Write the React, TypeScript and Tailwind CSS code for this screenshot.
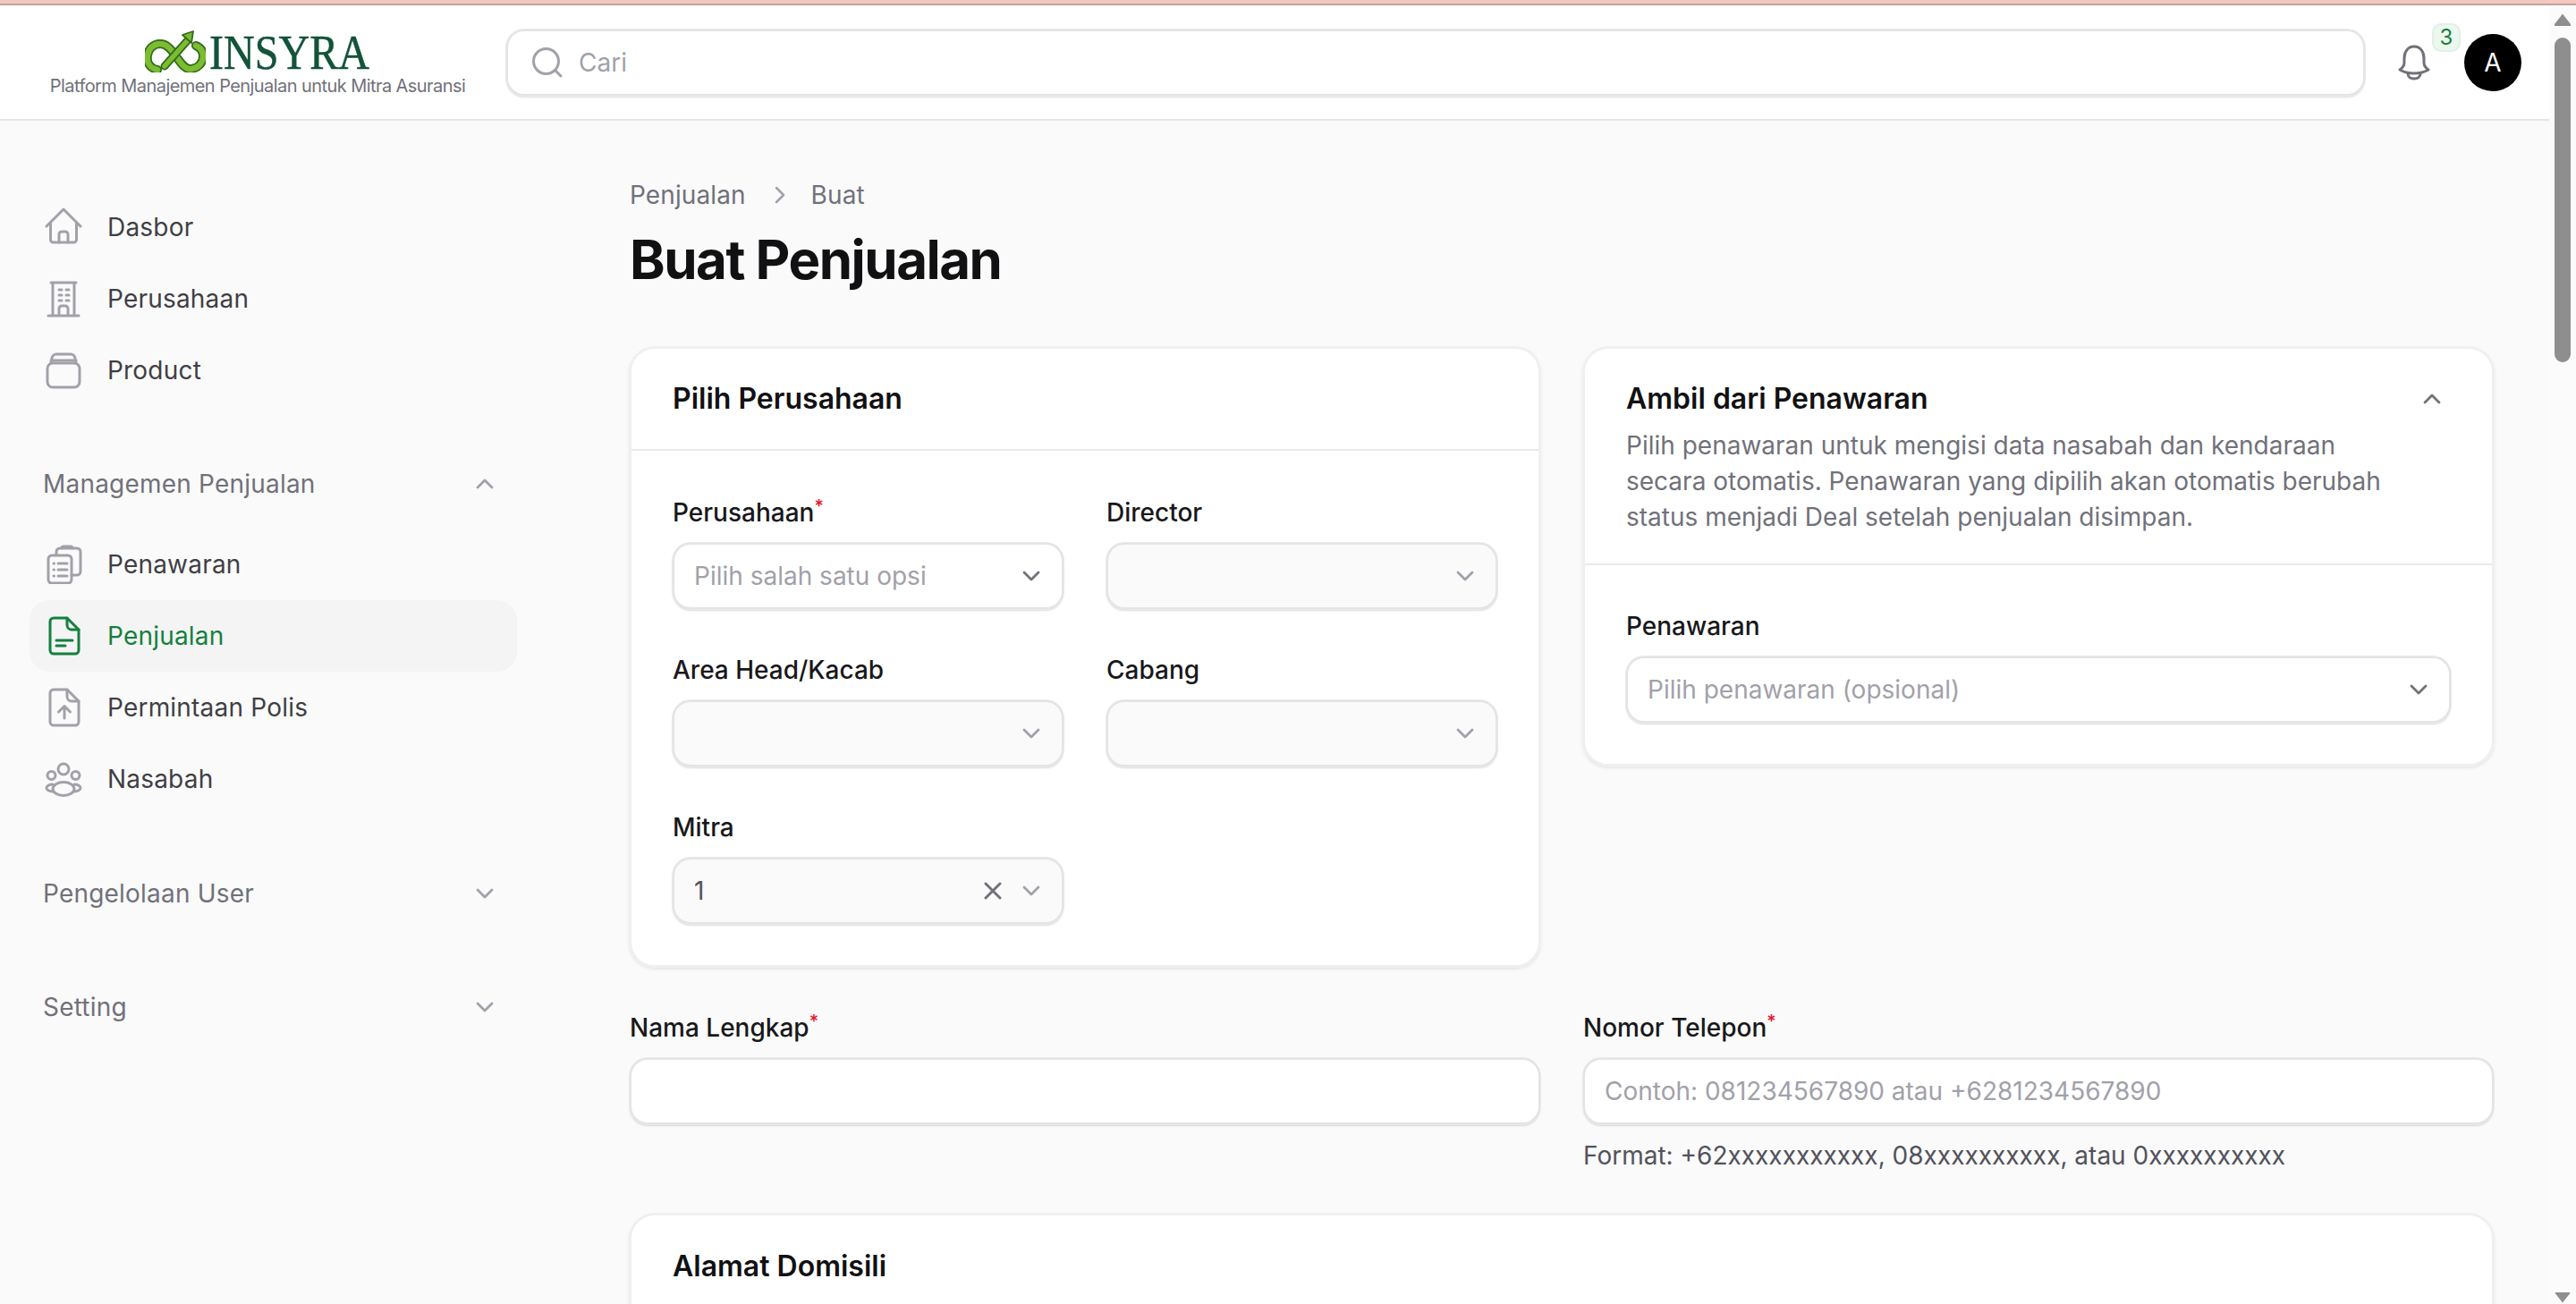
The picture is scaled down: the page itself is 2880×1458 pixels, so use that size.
import type { ReactNode } from "react";

const IconBox = ({ children, className = "text-[#a1a1aa]" }: { children: ReactNode; className?: string }) => (
  <svg viewBox="0 0 44 44" fill="none" stroke="currentColor" strokeWidth="3" strokeLinecap="round" strokeLinejoin="round" className={`h-[44px] w-[44px] shrink-0 ${className}`}>
    {children}
  </svg>
);

const HomeIcon = () => (
  <IconBox>
    <path d="M3 21 22 2l19 19" />
    <path d="M7.5 17v19a3 3 0 0 0 3 3h23a3 3 0 0 0 3-3V17" />
    <path d="M17 39V30a3 3 0 0 1 3-3h4a3 3 0 0 1 3 3v9" />
  </IconBox>
);

const BuildingIcon = () => (
  <IconBox>
    <path d="M8 4h28M10 4v36M34 4v36M5 41h34" />
    <path d="M17 40v-7a3 3 0 0 1 3-3h4a3 3 0 0 1 3 3v7" />
    <path d="M17 12h3M25 12h3M17 18h3M25 18h3M17 24h3M25 24h3" />
  </IconBox>
);

const ProductIcon = () => (
  <IconBox>
    <rect x="4" y="14" width="36" height="27" rx="6" />
    <path d="M8 14l1-5a5 5 0 0 1 5-5h16a5 5 0 0 1 5 5l1 5" />
    <path d="M8 11h28" />
  </IconBox>
);

const ClipboardIcon = () => (
  <IconBox>
    <rect x="5" y="12" width="26" height="31" rx="4" />
    <path d="M14 11V8a4 4 0 0 1 4-4h19a4 4 0 0 1 4 4v22a4 4 0 0 1-4 4h-6" />
    <path d="M20 4V3a2 2 0 0 1 2-1h8a2 2 0 0 1 2 1v1" />
    <path d="M11 21h.5M11 28h.5M11 35h.5M16 21h10M16 28h10M16 35h10" />
  </IconBox>
);

const FileLinesIcon = () => (
  <IconBox className="text-[#15803d]">
    <path d="M11 2h15l13 13v23a4 4 0 0 1-4 4H11a4 4 0 0 1-4-4V6a4 4 0 0 1 4-4Z" />
    <path d="M26 2v8a5 5 0 0 0 5 5h8" />
    <path d="M14 27h18M14 33h10" />
  </IconBox>
);

const FileUpIcon = () => (
  <IconBox>
    <path d="M11 2h15l13 13v23a4 4 0 0 1-4 4H11a4 4 0 0 1-4-4V6a4 4 0 0 1 4-4Z" />
    <path d="M26 2v8a5 5 0 0 0 5 5h8" />
    <path d="M23 34V21M16.500 27l6.500-6.500 6.500 6.500" />
  </IconBox>
);

const UsersIcon = () => (
  <IconBox>
    <circle cx="22" cy="11" r="6" />
    <circle cx="8.500" cy="18" r="4.500" />
    <circle cx="35.500" cy="18" r="4.500" />
    <ellipse cx="22" cy="33" rx="12" ry="7.500" />
    <path d="M10 28c-4 0-7 2-7 4s3 4 7 4M34 28c4 0 7 2 7 4s-3 4-7 4" />
  </IconBox>
);

const Chevron = ({ up = false, className = "text-[#a1a1aa]" }: { up?: boolean; className?: string }) => (
  <svg viewBox="0 0 20 12" fill="none" stroke="currentColor" strokeWidth="2.800" strokeLinecap="round" strokeLinejoin="round" className={`h-[12px] w-[20px] shrink-0 ${className}`}>
    <path d={up ? "M2 10l8-8 8 8" : "M2 2l8 8 8-8"} />
  </svg>
);

const Logo = () => (
  <div className="flex w-[464px] shrink-0 flex-col items-center">
    <div className="mt-[2px] flex h-[48px] items-end">
      <svg viewBox="0 0 68 47" fill="none" strokeLinecap="round" strokeLinejoin="round" className="h-[47px] w-[68px]">
        <path d="M14 44C4 42 2 34 3 28c1-8 7-13 14-13 9 0 14 9 20 17 5 7 9 12 15 11 8-1 13-7 13-14 0-6-3-10-8-12" stroke="#2f6b1e" strokeWidth="10" />
        <path d="M14 44C4 42 2 34 3 28c1-8 7-13 14-13 9 0 14 9 20 17 5 7 9 12 15 11 8-1 13-7 13-14 0-6-3-10-8-12" stroke="#7dbb30" strokeWidth="6.500" />
        <path d="M22 40 47 12" stroke="#2f6b1e" strokeWidth="9" />
        <path d="M22 40 47 12" stroke="#7dbb30" strokeWidth="5.500" />
        <path d="M54 1 42 5l10 9Z" fill="#7dbb30" stroke="#2f6b1e" strokeWidth="1.800" />
      </svg>
      <span className="ml-[4px] w-[181px] origin-left scale-x-[0.89] whitespace-nowrap font-['Liberation_Serif',serif] text-[54px] leading-[43px] text-[#12533a] [-webkit-text-stroke:0.5px_#12533a]">INSYRA</span>
    </div>
    <p className="mt-[3px] whitespace-nowrap text-[20px] leading-[24px] tracking-[-0.570px] text-[#71717a]">Platform Manajemen Penjualan untuk Mitra Asuransi</p>
  </div>
);

const NavRow = ({ icon, label, active = false }: { icon: ReactNode; label: string; active?: boolean }) => (
  <div className={`flex h-[80px] items-center gap-[27px] rounded-[22px] pl-[16px] text-[28px] tracking-[0.200px] ${active ? "bg-[#f4f4f5] text-[#15803d]" : "text-[#3f3f46]"}`}>
    {icon}
    <span>{label}</span>
  </div>
);

const NavSection = ({ label, up = false, className }: { label: string; up?: boolean; className: string }) => (
  <div className={`flex h-[40px] items-center justify-between pl-[15px] pr-[26px] text-[28px] tracking-[0.200px] text-[#71717a] ${className}`}>
    <span>{label}</span>
    <Chevron up={up} />
  </div>
);

const Label = ({ text, required = false }: { text: string; required?: boolean }) => (
  <label className="block text-[28px] font-medium leading-[40px] text-[#18181b]">
    {text}
    {required && <span className="align-super text-[20px] leading-none text-[#e5112b]">*</span>}
  </label>
);

const fieldBox = "mt-[14px] flex h-[74px] items-center rounded-[20px] border-2 border-[#e4e4e7] shadow-[0_0_0_1px_#e9e9eb,0_2px_2px_rgba(0,0,0,0.14)]";

const SelectField = ({
  label,
  required = false,
  placeholder,
  value,
  disabled = false,
}: {
  label: string;
  required?: boolean;
  placeholder?: string;
  value?: string;
  disabled?: boolean;
}) => (
  <div>
    <Label text={label} required={required} />
    <div className={`${fieldBox} pl-[22px] pr-[24px] text-[28px] ${disabled ? "bg-[#fafafa]" : "bg-white"}`}>
      <span className={`flex-1 ${value ? "text-[#52525b]" : "text-[#a1a1aa]"}`}>{value ?? placeholder}</span>
      {value && (
        <svg viewBox="0 0 20 20" fill="none" stroke="#71717a" strokeWidth="3" strokeLinecap="round" className="mr-[23px] h-[20px] w-[20px]">
          <path d="M2 2l16 16M18 2 2 18" />
        </svg>
      )}
      <Chevron className={disabled ? "text-[#a1a1aa]" : "text-[#71717a]"} />
    </div>
  </div>
);

const TextField = ({ label, placeholder, hint }: { label: string; placeholder?: string; hint?: string }) => (
  <div>
    <Label text={label} required />
    <div className={`${fieldBox} bg-white px-[22px] text-[28px] text-[#a1a1aa]`}>{placeholder}</div>
    {hint && <p className="mt-[15px] text-[28px] leading-[40px] text-[#52525b]">{hint}</p>}
  </div>
);

const cardBox = "rounded-[28px] border-2 border-[#efefef] bg-white shadow-[0_0_0_1px_#f1f1f1,0_2px_4px_rgba(0,0,0,0.12)]";

export default function App() {
  return (
    <div className="flex h-screen w-full flex-col overflow-hidden bg-[#fafafa] font-['Inter',sans-serif]">
      {/* strip above the page */}
      <div className="h-[6px] shrink-0 border-b-2 border-[#c0a3a0] bg-[#f2c7c0]" />

      <div className="flex min-h-0 flex-1">
        <div className="flex min-w-0 flex-1 flex-col">
          {/* Header */}
          <header className="flex h-[129px] shrink-0 items-center border-b-2 border-[#e5e5e5] bg-white pl-[56px] pr-[31px]">
            <Logo />
            <div className="ml-[46px] flex h-[74px] flex-1 items-center rounded-[20px] border-2 border-[#e4e4e7] pl-[26px] text-[28px] text-[#a1a1aa] shadow-[0_0_0_1px_#e9e9eb,0_2px_2px_rgba(0,0,0,0.14)]">
              <svg viewBox="0 0 36 36" fill="none" stroke="currentColor" strokeWidth="3" strokeLinecap="round" className="h-[36px] w-[36px]">
                <circle cx="16.500" cy="16.500" r="14" />
                <path d="M27 27l6 6" />
              </svg>
              <span className="ml-[17px]">Cari</span>
            </div>
            <div className="relative ml-[37px] h-[40px] w-[36px]">
              <svg viewBox="0 0 36 40" fill="none" stroke="#71717a" strokeWidth="3" strokeLinecap="round" strokeLinejoin="round" className="h-[40px] w-[36px]">
                <path d="M18 2C11 2 7 8 7 15v5c0 4-2 6-5 8 5 3 11 4 16 4s11-1 16-4c-3-2-5-4-5-8v-5c0-7-4-13-11-13Z" />
                <path d="M11 32c0 4 3 6 7 6s7-2 7-6" />
              </svg>
              <span className="absolute -top-[24px] left-[38px] flex h-[32px] w-[32px] items-center justify-center rounded-[10px] border-2 border-[#dff1e5] bg-[#ecf7ef] text-[24px] text-[#15803d]">3</span>
            </div>
            <div className="ml-[38px] flex h-[64px] w-[64px] items-center justify-center rounded-full bg-black text-[28px] text-white">A</div>
          </header>

          <div className="flex min-h-0 flex-1">
            {/* Sidebar */}
            <aside className="w-[610px] shrink-0 pl-[33px] pr-[32px] pt-[79px]">
              <NavRow icon={<HomeIcon />} label="Dasbor" />
              <NavRow icon={<BuildingIcon />} label="Perusahaan" />
              <NavRow icon={<ProductIcon />} label="Product" />
              <NavSection label="Managemen Penjualan" up className="mb-[30px] mt-[67px]" />
              <NavRow icon={<ClipboardIcon />} label="Penawaran" />
              <NavRow icon={<FileLinesIcon />} label="Penjualan" active />
              <NavRow icon={<FileUpIcon />} label="Permintaan Polis" />
              <NavRow icon={<UsersIcon />} label="Nasabah" />
              <NavSection label="Pengelolaan User" className="mt-[68px]" />
              <NavSection label="Setting" className="mt-[87px]" />
            </aside>

            {/* Main */}
            <main className="min-w-0 flex-1 pl-[94px] pr-[62px] pt-[63px]">
              <div className="flex h-[40px] items-center text-[28px] tracking-[0.100px] text-[#71717a]">
                <span>Penjualan</span>
                <svg viewBox="0 0 12 20" fill="none" stroke="#a1a1aa" strokeWidth="2.500" strokeLinecap="round" strokeLinejoin="round" className="ml-[32px] h-[20px] w-[12px]">
                  <path d="M2 2l8 8-8 8" />
                </svg>
                <span className="ml-[29px]">Buat</span>
              </div>
              <h1 className="mt-[16px] text-[60px] font-bold leading-[72px] tracking-[-1.500px] text-[#111113]">Buat Penjualan</h1>

              <div className="mt-[62px] grid grid-cols-2 items-start gap-x-[48px]">
                <section className={cardBox}>
                  <div className="flex h-[114px] items-center border-b-2 border-[#e9e9ea] px-[46px]">
                    <h2 className="text-[32px] font-semibold leading-[44px] text-[#111113]">Pilih Perusahaan</h2>
                  </div>
                  <div className="grid grid-cols-2 gap-x-[48px] gap-y-[48px] px-[46px] pb-[46px] pt-[49px]">
                    <SelectField label="Perusahaan" required placeholder="Pilih salah satu opsi" />
                    <SelectField label="Director" disabled />
                    <SelectField label="Area Head/Kacab" disabled />
                    <SelectField label="Cabang" disabled />
                    <SelectField label="Mitra" value="1" disabled />
                  </div>
                </section>

                <section className={cardBox}>
                  <div className="border-b-2 border-[#e9e9ea] px-[46px] pb-[32px] pt-[34px]">
                    <div className="flex items-center justify-between pr-[11px]">
                      <h2 className="text-[32px] font-semibold leading-[44px] text-[#111113]">Ambil dari Penawaran</h2>
                      <Chevron up className="text-[#71717a]" />
                    </div>
                    <p className="mt-[10px] pr-[50px] text-[28px] leading-[40px] text-[#71717a]">
                      Pilih penawaran untuk mengisi data nasabah dan kendaraan secara otomatis. Penawaran yang dipilih akan otomatis berubah status menjadi Deal setelah penjualan disimpan.
                    </p>
                  </div>
                  <div className="px-[46px] pb-[46px] pt-[48px]">
                    <SelectField label="Penawaran" placeholder="Pilih penawaran (opsional)" />
                  </div>
                </section>
              </div>

              <div className="mt-[48px] grid grid-cols-2 items-start gap-x-[48px]">
                <TextField label="Nama Lengkap" />
                <TextField label="Nomor Telepon" placeholder="Contoh: 081234567890 atau +6281234567890" hint="Format: +62xxxxxxxxxxx, 08xxxxxxxxxx, atau 0xxxxxxxxxx" />
              </div>

              <section className={`${cardBox} mt-[45px] h-[300px] px-[46px] pt-[35px]`}>
                <h2 className="text-[32px] font-semibold leading-[44px] text-[#111113]">Alamat Domisili</h2>
              </section>
            </main>
          </div>
        </div>

        {/* Scrollbar */}
        <div className="flex w-[30px] shrink-0 flex-col items-center justify-between bg-[#fbfbfb] pb-[1px] pt-[9px]">
          <div className="flex flex-col items-center">
            <svg viewBox="0 0 18 14" className="h-[14px] w-[18px] fill-[#8e8e8e]">
              <path d="M9 0.500 18 12a1 1 0 0 1-1 2H1a1 1 0 0 1-1-2Z" />
            </svg>
            <div className="mt-[13px] h-[363px] w-[18px] rounded-full bg-[#8e8e8e]" />
          </div>
          <svg viewBox="0 0 18 14" className="h-[12px] w-[18px] fill-[#8e8e8e]">
            <path d="M9 13.500 18 2a1 1 0 0 0-1-2H1a1 1 0 0 0-1 2Z" />
          </svg>
        </div>
      </div>
    </div>
  );
}
